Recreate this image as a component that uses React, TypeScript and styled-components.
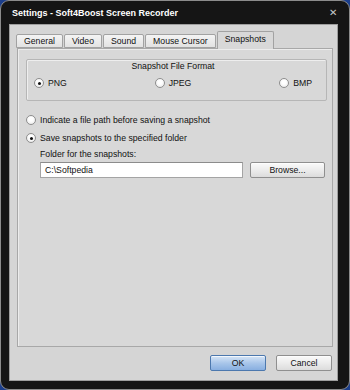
import styled, { createGlobalStyle } from "styled-components";

const GlobalStyle = createGlobalStyle`
    html, body {
        margin: 0;
        padding: 0;
        background: #1c3f8c;
    }
    body {
        font-family: "Liberation Sans", Arial, sans-serif;
    }
`;

const Window = styled.div`
    box-sizing: border-box;
    width: 350px;
    height: 390px;
    display: flex;
    flex-direction: column;
    background: #151515;
    border: 1px solid #8c8c8c;
    border-radius: 9px;
    overflow: hidden;
`;

const TitleBar = styled.div`
    height: 23px;
    display: flex;
    align-items: center;
    justify-content: space-between;
    padding: 0 12px 0 11px;
    color: #ffffff;
    font-size: 9px;
    font-weight: bold;
`;

const CloseGlyph = styled.span`
    color: #c8c8c8;
    font-size: 10px;
    font-weight: normal;
    line-height: 1;
`;

const Body = styled.div`
    flex: 1;
    display: flex;
    flex-direction: column;
    margin: 0 11px 8px 8px;
    padding: 6px 4px 9px 6px;
    background: #d5d5d5;
    border: 1px solid #9e9e9e;
    font-size: 8.7px;
    color: #111;
`;

const TabStrip = styled.div`
    height: 17px;
    display: flex;
    align-items: flex-end;
    gap: 1px;
    position: relative;
    z-index: 1;
`;

const Tab = styled.div<{ $active?: boolean }>`
    box-sizing: border-box;
    height: ${(p) => (p.$active ? "18px" : "14px")};
    padding: 0 7px;
    display: flex;
    align-items: center;
    padding-bottom: ${(p) => (p.$active ? "3px" : "0")};
    border: 1px solid #a2a2a2;
    border-bottom: ${(p) => (p.$active ? "none" : "1px solid #a2a2a2")};
    border-radius: 2px 2px 0 0;
    background: ${(p) =>
        p.$active ? "#d8d8d8" : "linear-gradient(#f4f4f4, #e2e2e2)"};
    margin-bottom: ${(p) => (p.$active ? "-1px" : "0")};
`;

const Panel = styled.div`
    flex: 1;
    margin-left: 1px;
    display: flex;
    flex-direction: column;
    padding: 10px 5px 0 8px;
    background: #d8d8d8;
    border: 1px solid #a8a8a8;
    box-shadow: inset 1px 1px 0 #ececec;
`;

const GroupBox = styled.div`
    height: 42px;
    box-sizing: border-box;
    display: flex;
    flex-direction: column;
    padding: 1px 14px 0 7px;
    border: 1px solid #b6b6b6;
    box-shadow: inset 1px 1px 0 #eeeeee;
    border-radius: 2px;
`;

const GroupTitle = styled.div`
    height: 11px;
    line-height: 11px;
    text-align: center;
    margin-bottom: 5px;
`;

const RadioRow = styled.div`
    display: flex;
    justify-content: space-between;
`;

const RadioLabel = styled.label`
    display: flex;
    align-items: center;
    gap: 4px;
    height: 12px;
`;

const RadioCircle = styled.span<{ $checked?: boolean }>`
    box-sizing: border-box;
    width: 10px;
    height: 10px;
    border-radius: 50%;
    border: 1px solid #8e8e8e;
    background: radial-gradient(circle at 50% 40%, #ffffff 30%, #e4e4e4 100%);
    display: flex;
    align-items: center;
    justify-content: center;
    &::after {
        content: "";
        width: 3px;
        height: 3px;
        border-radius: 50%;
        background: ${(p) => (p.$checked ? "#111" : "transparent")};
    }
`;

const Options = styled.div`
    margin-top: 13px;
    display: flex;
    flex-direction: column;
    gap: 6px;
`;

const FolderBlock = styled.div`
    margin: -1px 2px 0 14px;
    display: flex;
    flex-direction: column;
    gap: 3px;
`;

const FolderRow = styled.div`
    display: flex;
    gap: 7px;
`;

const PathInput = styled.div`
    flex: 1;
    height: 16px;
    box-sizing: border-box;
    display: flex;
    align-items: center;
    padding-left: 4px;
    background: #ffffff;
    border: 1px solid #a4a4a4;
    border-top-color: #8c8c8c;
`;

const Button = styled.div<{ $primary?: boolean }>`
    box-sizing: border-box;
    width: 56px;
    height: 16px;
    display: flex;
    align-items: center;
    justify-content: center;
    border-radius: 2px;
    border: 1px solid ${(p) => (p.$primary ? "#4c78ae" : "#8f8f8f")};
    background: ${(p) =>
        p.$primary
            ? "linear-gradient(#d6e5f6, #a9c6ea 50%, #88afe0)"
            : "linear-gradient(#fafafa, #ececec 50%, #dcdcdc)"};
    box-shadow: inset 0 1px 0 rgba(255, 255, 255, 0.7);
`;

const BrowseButton = styled(Button)`
    width: 75px;
`;

const Footer = styled.div`
    margin-top: 8px;
    display: flex;
    justify-content: flex-end;
    gap: 10px;
    padding-right: 1px;
`;

const Radio = ({ checked, label }: { checked?: boolean; label: string }) => (
    <RadioLabel>
        <RadioCircle $checked={checked} />
        {label}
    </RadioLabel>
);

const tabs = ["General", "Video", "Sound", "Mouse Cursor", "Snapshots"];

const App = () => (
    <>
        <GlobalStyle />
        <Window>
            <TitleBar>
                <span>Settings - Soft4Boost Screen Recorder</span>
                <CloseGlyph>✕</CloseGlyph>
            </TitleBar>
            <Body>
                <TabStrip>
                    {tabs.map((t) => (
                        <Tab key={t} $active={t === "Snapshots"}>
                            {t}
                        </Tab>
                    ))}
                </TabStrip>
                <Panel>
                    <GroupBox>
                        <GroupTitle>Snapshot File Format</GroupTitle>
                        <RadioRow>
                            <Radio checked label="PNG" />
                            <Radio label="JPEG" />
                            <Radio label="BMP" />
                        </RadioRow>
                    </GroupBox>
                    <Options>
                        <Radio label="Indicate a file path before saving a snapshot" />
                        <Radio checked label="Save snapshots to the specified folder" />
                        <FolderBlock>
                            <span>Folder for the snapshots:</span>
                            <FolderRow>
                                <PathInput>C:\Softpedia</PathInput>
                                <BrowseButton>Browse...</BrowseButton>
                            </FolderRow>
                        </FolderBlock>
                    </Options>
                </Panel>
                <Footer>
                    <Button $primary>OK</Button>
                    <Button>Cancel</Button>
                </Footer>
            </Body>
        </Window>
    </>
);

export default App;
